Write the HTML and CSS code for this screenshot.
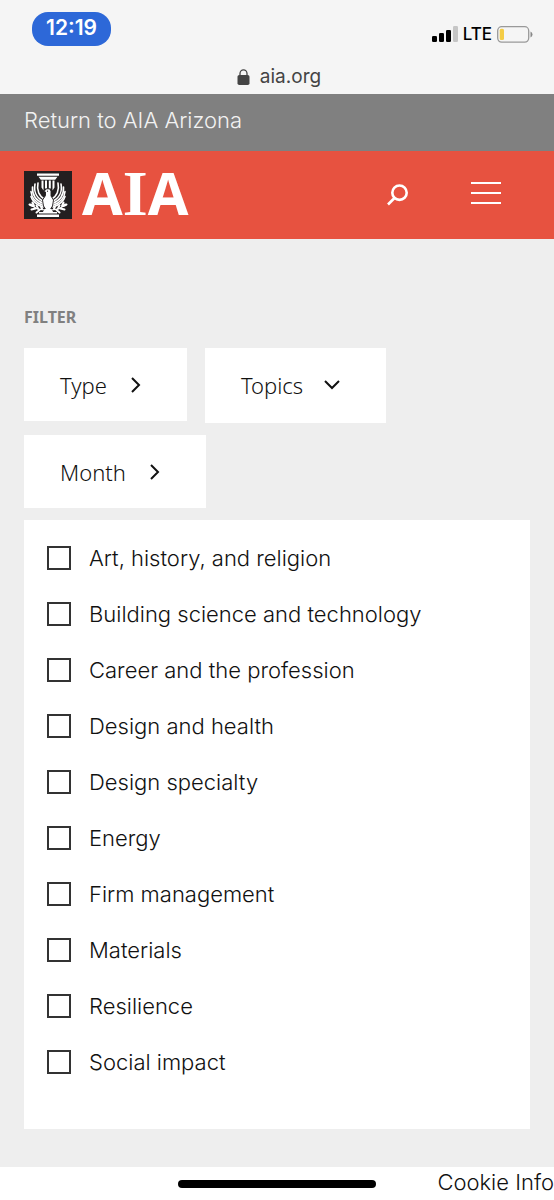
FILE: index.html
```html
<!DOCTYPE html>
<html lang="en">
<head>
<meta charset="utf-8">
<meta name="viewport" content="width=device-width, initial-scale=1">
<title>AIA</title>
<link rel="stylesheet" href="styles.css">
</head>
<body>
<div class="browser">
    <div class="status">
        <span class="time">12:19</span>
        <div class="signals">
            <svg width="26" height="16" viewBox="0 0 26 16">
                <rect x="0" y="10" width="5" height="6" rx="1.3"/>
                <rect x="7" y="7" width="5" height="9" rx="1.3"/>
                <rect x="14" y="4" width="5" height="12" rx="1.3"/>
                <rect x="21" y="0" width="5" height="16" rx="1.3" fill="#c6c6c6"/>
            </svg>
            <span class="network">LTE</span>
            <svg width="36" height="17" viewBox="0 0 36 17">
                <rect x=".7" y=".7" width="31" height="15.4" rx="4" fill="none" stroke="#999" stroke-width="1.3"/>
                <rect x="2.7" y="2.8" width="4.3" height="11.2" rx="1.5" fill="#f4cc45"/>
                <path d="M33.5 5.5q2 1 2 3t-2 3z" fill="#888"/>
            </svg>
        </div>
    </div>
    <div class="address">
        <svg width="13" height="16" viewBox="0 0 13 16">
            <path d="M3 8V4.5a3.5 3.7 0 0 1 7 0V8" fill="none" stroke="#444" stroke-width="1.3"/>
            <rect x=".5" y="6" width="12" height="10" rx="1.8" fill="#444"/>
        </svg>
        <span>aia.org</span>
    </div>
</div>
<a class="return" href="#">Return to AIA Arizona</a>
<header class="header">
    <a class="logo" href="#" aria-label="AIA home">
        <svg width="48" height="48" viewBox="0 0 48 48">
            <rect width="48" height="48" fill="#231f20"/>
            <g fill="#fff">
                <path d="M13 2.5h22v2.3H13zM14.5 5.7h19l-2.3 3h-14.4zM13 43.5h22v2.5H13zM15 41h4l2-3h6l2 3h4v1.5H15z"/>
                <path d="M17.5 9.5h2v10l-2-3zM21 9.5h2v8h-2zM24.8 9.5h2v8h-2zM28.5 9.5h2v7l-2 3z"/>
            </g>
            <!-- wing feathers, the right side mirrors the left -->
            <g id="wing" fill="none" stroke="#fff" stroke-width="1.6" stroke-linecap="round">
                <path d="M14 12C12.5 19 15 25.5 21 28.5"/>
                <path d="M11 13C9.5 21 13 27.5 20 30.5"/>
                <path d="M8.5 16C8 24 12 29.5 19.5 32.5"/>
                <path d="M7 20.5C7.5 27 12 31.8 19 34.3"/>
                <path d="M7 25.5C8.5 31 13 34 19 36"/>
                <path d="M7 33C10 38 15 38.5 21 39" stroke-width="1.2"/>
                <path d="M5.5 33.5l3 1.5M8.5 31.5l1.5 3.5M7.5 38.5l4-1M12.5 34.5l1.5 3M12.5 41.5l3-2.5M17 35.8l1 2" stroke-width="2"/>
            </g>
            <use href="#wing" transform="matrix(-1 0 0 1 48 0)"/>
            <path d="M19.8 20.5l2.7-2.7h3l1.5 2.2v5l2.5 4-1 6-2.5 4h-4l-2.5-4-1-6 3-4.5v-3.5z" fill="#fff" stroke="#231f20" stroke-width=".9"/>
            <path d="M21 38h6l2 3-3-1-2 2-2-2-3 1z" fill="#fff"/>
            <circle cx="23.5" cy="20.2" r=".6" fill="#231f20"/>
        </svg>
        <span class="wordmark">A<span class="slab">I</span>A</span>
    </a>
    <nav class="actions">
        <button class="icon-button" aria-label="Search">
            <svg width="22" height="22" viewBox="0 0 22 22" fill="none" stroke="#fff" stroke-width="2.6">
                <circle cx="12.5" cy="8.7" r="7.2"/>
                <path d="M7.5 14L1 20.5"/>
            </svg>
        </button>
        <button class="icon-button" aria-label="Menu">
            <svg width="30" height="26" viewBox="0 0 30 26" fill="none" stroke="#fff" stroke-width="2">
                <path d="M0 1h30M0 11h30M0 21h30"/>
            </svg>
        </button>
    </nav>
</header>
<main class="main">
    <h2 class="filter-title">Filter</h2>
    <div class="filters">
        <button class="filter">Type
            <svg width="10" height="16" viewBox="0 0 10 16"><path d="M1 1l7 7-7 7"/></svg>
        </button>
        <button class="filter open" aria-expanded="true">Topics
            <svg width="16" height="10" viewBox="0 0 16 10"><path d="M1 1l7 7 7-7"/></svg>
        </button>
        <button class="filter">Month
            <svg width="10" height="16" viewBox="0 0 10 16"><path d="M1 1l7 7-7 7"/></svg>
        </button>
    </div>
    <form class="topics">
        <label class="topic"><input type="checkbox" name="topic"> Art, history, and religion</label>
        <label class="topic"><input type="checkbox" name="topic"> Building science and technology</label>
        <label class="topic"><input type="checkbox" name="topic"> Career and the profession</label>
        <label class="topic"><input type="checkbox" name="topic"> Design and health</label>
        <label class="topic"><input type="checkbox" name="topic"> Design specialty</label>
        <label class="topic"><input type="checkbox" name="topic"> Energy</label>
        <label class="topic"><input type="checkbox" name="topic"> Firm management</label>
        <label class="topic"><input type="checkbox" name="topic"> Materials</label>
        <label class="topic"><input type="checkbox" name="topic"> Resilience</label>
        <label class="topic"><input type="checkbox" name="topic"> Social impact</label>
    </form>
</main>
<footer class="footer">
    <a href="#">Cookie Info</a>
    <div class="home-bar"></div>
</footer>
</body>
</html>
```

FILE: styles.css
```css
* {
    box-sizing: border-box;
}

body {
    margin: 0;
    background: #fff;
    color: #111;
    font-family: Inter, "Noto Sans", sans-serif;
    font-size: 22px;
    font-weight: 300;
}

svg {
    display: block;
    flex-shrink: 0;
}

a {
    color: inherit;
    text-decoration: none;
}

button {
    border: 0;
    font: inherit;
    color: inherit;
    cursor: pointer;
}

.browser {
    background: #f5f5f5;
    font-weight: 400;
}

.status {
    display: flex;
    justify-content: space-between;
    padding: 12px 21px 0 32px;
}

.time {
    padding: 0 14px;
    border-radius: 16px;
    background: #2d68d8;
    color: #fff;
    font-size: 21px;
    font-weight: 600;
    line-height: 32px;
}

.signals {
    display: flex;
    align-items: center;
    gap: 5px;
    padding-top: 10px;
}

.network {
    color: #000;
    font-size: 17px;
    font-weight: 500;
    line-height: 24px;
}

.address {
    display: flex;
    align-items: center;
    justify-content: center;
    gap: 10px;
    padding: 19px 0 5px 4px;
    color: #444;
    font-size: 19px;
    line-height: 24px;
}

.return {
    display: block;
    padding: 10px 24px 15px;
    background: #808080;
    color: #f2f2f2;
    line-height: 32px;
}

.header {
    display: flex;
    align-items: center;
    justify-content: space-between;
    height: 88px;
    padding: 0 48px 0 24px;
    background: #e75240;
    color: #fff;
}

.logo {
    display: flex;
    align-items: center;
    gap: 10px;
}

.wordmark {
    padding-bottom: 6px;
    font-family: "Open Sans", sans-serif;
    font-size: 59px;
    font-weight: 700;
    line-height: 72px;
}

.slab {
    font-family: "Liberation Serif", serif;
    font-size: 64px;
    line-height: 1;
}

.actions {
    display: flex;
    align-items: center;
    gap: 52px;
}

.icon-button {
    padding: 5px;
    background: none;
}

.main {
    padding: 66px 24px 38px;
    background: #eee;
}

.filter-title {
    margin: 0 0 19px;
    color: #808080;
    font-family: "Noto Sans", sans-serif;
    font-size: 16px;
    font-weight: 700;
    line-height: 24px;
    text-transform: uppercase;
}

.filters {
    display: flex;
    flex-wrap: wrap;
    align-items: flex-start;
    gap: 12px 18px;
    margin-bottom: 12px;
}

.filter {
    display: flex;
    align-items: center;
    gap: 24px;
    padding: 21px 46px 20px 36px;
    background: #fff;
    font-family: "Noto Sans", sans-serif;
    line-height: 32px;
}

.filter.open {
    gap: 21px;
    padding-bottom: 22px;
}

.filter svg {
    fill: none;
    stroke: #111;
    stroke-width: 2;
}

.topics {
    padding: 10px 23px 39px;
    background: #fff;
}

.topic {
    display: flex;
    align-items: center;
    gap: 18px;
    line-height: 56px;
}

.topic input {
    appearance: none;
    width: 24px;
    height: 24px;
    margin: 0;
    border: 2px solid #333;
    background: #fff;
}

.topic input:checked {
    background: #222;
}

.footer {
    position: relative;
    padding-bottom: 3px;
    text-align: right;
    line-height: 30px;
}

.home-bar {
    position: absolute;
    left: 50%;
    bottom: 12px;
    width: 198px;
    height: 8px;
    margin-left: -99px;
    border-radius: 4px;
    background: #000;
}
```
